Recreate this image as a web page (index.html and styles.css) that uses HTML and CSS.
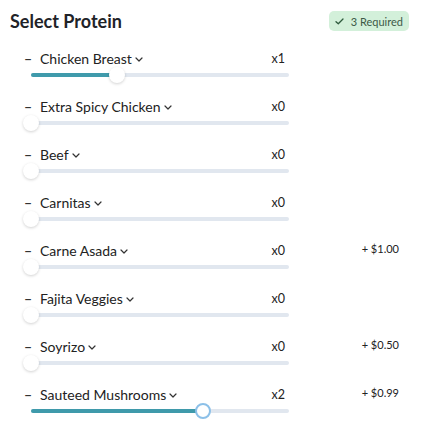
FILE: index.html
```html
<!DOCTYPE html>
<html>
<head>
<meta charset="utf-8">
<link rel="stylesheet" href="styles.css">
</head>
<body>
<div class="panel">
  <div class="header">
    <h1 class="title">Select Protein</h1>
    <span class="badge"><svg class="check" viewBox="0 0 10 8" width="9" height="7"><path d="M1 4.2 L3.6 6.6 L9 1.2" fill="none" stroke="#2e5a3d" stroke-width="1.5" stroke-linecap="round" stroke-linejoin="round"/></svg>3 Required</span>
  </div>
  <div class="list">
    <div class="row">
      <div class="main">
        <div class="top"><span class="minus">–</span><span class="label">Chicken Breast</span><svg class="chev" viewBox="0 0 8 5" width="8" height="5"><path d="M1 1 L4 4 L7 1" fill="none" stroke="#333" stroke-width="1.2" stroke-linecap="round" stroke-linejoin="round"/></svg><span class="qty">x1</span></div>
        <div class="slider"><div class="track"></div><div class="fill" style="width:33.333%"></div><div class="thumb" style="left:33.333%"></div></div>
      </div>
    </div>
    <div class="row">
      <div class="main">
        <div class="top"><span class="minus">–</span><span class="label">Extra Spicy Chicken</span><svg class="chev" viewBox="0 0 8 5" width="8" height="5"><path d="M1 1 L4 4 L7 1" fill="none" stroke="#333" stroke-width="1.2" stroke-linecap="round" stroke-linejoin="round"/></svg><span class="qty">x0</span></div>
        <div class="slider"><div class="track"></div><div class="thumb" style="left:0%"></div></div>
      </div>
    </div>
    <div class="row">
      <div class="main">
        <div class="top"><span class="minus">–</span><span class="label">Beef</span><svg class="chev" viewBox="0 0 8 5" width="8" height="5"><path d="M1 1 L4 4 L7 1" fill="none" stroke="#333" stroke-width="1.2" stroke-linecap="round" stroke-linejoin="round"/></svg><span class="qty">x0</span></div>
        <div class="slider"><div class="track"></div><div class="thumb" style="left:0%"></div></div>
      </div>
    </div>
    <div class="row">
      <div class="main">
        <div class="top"><span class="minus">–</span><span class="label">Carnitas</span><svg class="chev" viewBox="0 0 8 5" width="8" height="5"><path d="M1 1 L4 4 L7 1" fill="none" stroke="#333" stroke-width="1.2" stroke-linecap="round" stroke-linejoin="round"/></svg><span class="qty">x0</span></div>
        <div class="slider"><div class="track"></div><div class="thumb" style="left:0%"></div></div>
      </div>
    </div>
    <div class="row">
      <div class="main">
        <div class="top"><span class="minus">–</span><span class="label">Carne Asada</span><svg class="chev" viewBox="0 0 8 5" width="8" height="5"><path d="M1 1 L4 4 L7 1" fill="none" stroke="#333" stroke-width="1.2" stroke-linecap="round" stroke-linejoin="round"/></svg><span class="qty">x0</span></div>
        <div class="slider"><div class="track"></div><div class="thumb" style="left:0%"></div></div>
      </div>
      <span class="price">+ $1.00</span>
    </div>
    <div class="row">
      <div class="main">
        <div class="top"><span class="minus">–</span><span class="label">Fajita Veggies</span><svg class="chev" viewBox="0 0 8 5" width="8" height="5"><path d="M1 1 L4 4 L7 1" fill="none" stroke="#333" stroke-width="1.2" stroke-linecap="round" stroke-linejoin="round"/></svg><span class="qty">x0</span></div>
        <div class="slider"><div class="track"></div><div class="thumb" style="left:0%"></div></div>
      </div>
    </div>
    <div class="row">
      <div class="main">
        <div class="top"><span class="minus">–</span><span class="label">Soyrizo</span><svg class="chev" viewBox="0 0 8 5" width="8" height="5"><path d="M1 1 L4 4 L7 1" fill="none" stroke="#333" stroke-width="1.2" stroke-linecap="round" stroke-linejoin="round"/></svg><span class="qty">x0</span></div>
        <div class="slider"><div class="track"></div><div class="thumb" style="left:0%"></div></div>
      </div>
      <span class="price">+ $0.50</span>
    </div>
    <div class="row">
      <div class="main">
        <div class="top"><span class="minus">–</span><span class="label">Sauteed Mushrooms</span><svg class="chev" viewBox="0 0 8 5" width="8" height="5"><path d="M1 1 L4 4 L7 1" fill="none" stroke="#333" stroke-width="1.2" stroke-linecap="round" stroke-linejoin="round"/></svg><span class="qty">x2</span></div>
        <div class="slider"><div class="track"></div><div class="fill" style="width:66.667%"></div><div class="thumb focused" style="left:66.667%"></div></div>
      </div>
      <span class="price">+ $0.99</span>
    </div>
  </div>
</div>
</body>
</html>
```
FILE: styles.css
```css
* { box-sizing: border-box; }
html, body { margin: 0; padding: 0; background: #fff; }
body {
  font-family: Lato, "Open Sans", "Liberation Sans", sans-serif;
  color: #222831;
}
.panel { width: 422px; height: 433px; overflow: hidden; }
.header {
  display: flex;
  justify-content: space-between;
  align-items: center;
  height: 31px;
  padding: 11px 13px 0 10px;
}
.title {
  margin: 0;
  font-size: 18px;
  font-weight: 700;
  color: #1f2328;
  line-height: 20px;
}
.badge {
  display: inline-flex;
  align-items: center;
  gap: 7px;
  height: 20px;
  padding: 0 6px 0 6px;
  white-space: nowrap;
  border-radius: 5px;
  background: #d3f0da;
  color: #3d5a47;
  font-size: 11px;
}
.check { flex: none; }
.list { margin-top: 17px; }
.row {
  display: flex;
  align-items: flex-start;
  padding: 0 23px 0 24px;
  height: 48px;
}
.main { width: 265px; }
.top {
  display: flex;
  align-items: center;
  height: 20px;
}
.minus { width: 16px; font-size: 14px; font-weight: 700; color: #333; }
.label { font-size: 14px; color: #222; }
.chev { margin-left: 3px; margin-top: 3px; }
.qty { margin-left: auto; margin-right: 4px; font-size: 12.5px; color: #222; }
.slider {
  position: relative;
  margin-left: 7px;
  width: 258px;
  height: 14px;
}
.track {
  position: absolute;
  left: 0; right: 0; top: 5px;
  height: 4px;
  border-radius: 2px;
  background: #e1e7ef;
}
.fill {
  position: absolute;
  left: 0; top: 5px;
  height: 4px;
  border-radius: 2px;
  background: #3f9aab;
}
.thumb {
  position: absolute;
  top: -1px;
  width: 16px;
  height: 16px;
  margin-left: -8px;
  border-radius: 50%;
  background: #fff;
  box-shadow: 0 1px 3px rgba(0,0,0,0.18);
}
.thumb.focused {
  border: 2px solid #8cc0e8;
  box-shadow: none;
}
.price {
  margin-left: auto;
  font-size: 11px;
  line-height: 18px;
  color: #222;
}
```
